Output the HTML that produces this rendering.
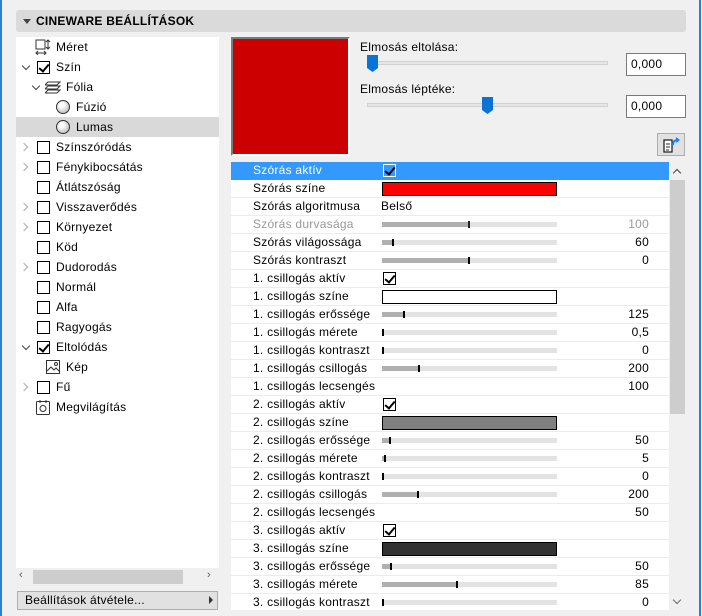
<!DOCTYPE html>
<html><head><meta charset="utf-8"><style>
*{box-sizing:border-box;margin:0;padding:0}
body{width:702px;height:616px;background:#f0f0f0;font-family:"Liberation Sans",sans-serif;font-size:12px;letter-spacing:0.25px;color:#000;position:relative;overflow:hidden}
.a{position:absolute}
.bl{left:0;top:0;width:2px;height:616px;background:#2b7fd6}
.br{left:699px;top:0;width:2px;height:616px;background:#2b7fd6}
.hdr{left:16px;top:10px;width:670px;height:22px;background:#dadada;border-radius:3px;font-weight:bold;font-size:12px;line-height:22px;padding-left:20px}
.tree{left:16px;top:37px;width:203px;height:531px;background:#fff}
.tr{position:absolute;left:0;width:203px;height:20px;line-height:20px}
.cb{position:absolute;top:4px;width:13px;height:13px;border:1px solid #000;background:#fff}
.cb.k::after{content:"";position:absolute;left:3px;top:0px;width:4px;height:8px;border:solid #000;border-width:0 2px 2px 0;transform:rotate(40deg)}
.chd{position:absolute;top:6px;width:6px;height:6px;border:solid #444;border-width:0 1.5px 1.5px 0;transform:rotate(45deg)}
.chr{position:absolute;top:7px;width:6px;height:6px;border:solid #aaa;border-width:0 1.5px 1.5px 0;transform:rotate(-45deg)}
.ball{position:absolute;top:3px;width:14px;height:14px;border-radius:50%;border:1px solid #333;background:radial-gradient(circle at 40% 35%,#fff 20%,#bbb 80%)}
.tbl{left:231px;top:162px;width:438px;height:448px;background:#fff;overflow:hidden}
.r{position:absolute;left:0;width:438px;height:18px;border-bottom:1px solid #ececec;line-height:17px}
.r .l{position:absolute;left:22px}
.r .n{position:absolute;right:20px}
.r .v{position:absolute;left:151px}
.sl{position:absolute;left:151px;top:6px;width:175px;height:5px;background:#e3e3e3}
.sl i{position:absolute;left:0;top:0;height:5px;background:#b0b0b0}
.sl b{position:absolute;top:-1px;width:2px;height:7px;background:#000}
.sw{position:absolute;left:151px;top:2px;width:175px;height:14px;border:1px solid #000}
.ck{position:absolute;left:152px;top:2px;width:13px;height:13px;border:1px solid #000;background:#fff}
.ck::after{content:"";position:absolute;left:3px;top:0;width:4px;height:8px;border:solid #000;border-width:0 2px 2px 0;transform:rotate(40deg)}
</style></head><body>
<div class="a bl"></div><div class="a br"></div>
<div class="a hdr">CINEWARE BEÁLLÍTÁSOK</div>
<div class="a" style="left:23px;top:19px;width:0;height:0;border-left:4px solid transparent;border-right:4px solid transparent;border-top:5px solid #444"></div>

<div class="a tree">
 <div class="tr" style="top:0"><svg class="a" style="left:19px;top:2px" width="16" height="16"><rect x="1" y="1" width="9" height="9" fill="none" stroke="#333"/><path d="M13 1v9M11 3l2-2 2 2M11 8l2 2 2-2M1 14h10M3 12l-2 2 2 2M9 12l2 2-2 2" fill="none" stroke="#333"/></svg><span class="a" style="left:40px">Méret</span></div>
 <div class="tr" style="top:20px"><span class="chd" style="left:7px"></span><span class="cb k" style="left:21px"></span><span class="a" style="left:40px">Szín</span></div>
 <div class="tr" style="top:40px"><span class="chd" style="left:17px"></span><svg class="a" style="left:29px;top:3px" width="16" height="14"><path d="M3 2h12l-3 3H0zM3 6h12l-3 3H0zM3 10h12l-3 3H0z" fill="#fff" stroke="#333"/></svg><span class="a" style="left:50px">Fólia</span></div>
 <div class="tr" style="top:60px"><span class="ball" style="left:40px"></span><span class="a" style="left:60px">Fúzió</span></div>
 <div class="tr" style="top:80px;background:#d9d9d9"><span class="ball" style="left:40px"></span><span class="a" style="left:60px">Lumas</span></div>
 <div class="tr" style="top:100px"><span class="chr" style="left:5px"></span><span class="cb" style="left:21px"></span><span class="a" style="left:40px">Színszóródás</span></div>
 <div class="tr" style="top:120px"><span class="chr" style="left:5px"></span><span class="cb" style="left:21px"></span><span class="a" style="left:40px">Fénykibocsátás</span></div>
 <div class="tr" style="top:140px"><span class="cb" style="left:21px"></span><span class="a" style="left:40px">Átlátszóság</span></div>
 <div class="tr" style="top:160px"><span class="chr" style="left:5px"></span><span class="cb" style="left:21px"></span><span class="a" style="left:40px">Visszaverődés</span></div>
 <div class="tr" style="top:180px"><span class="chr" style="left:5px"></span><span class="cb" style="left:21px"></span><span class="a" style="left:40px">Környezet</span></div>
 <div class="tr" style="top:200px"><span class="cb" style="left:21px"></span><span class="a" style="left:40px">Köd</span></div>
 <div class="tr" style="top:220px"><span class="chr" style="left:5px"></span><span class="cb" style="left:21px"></span><span class="a" style="left:40px">Dudorodás</span></div>
 <div class="tr" style="top:240px"><span class="cb" style="left:21px"></span><span class="a" style="left:40px">Normál</span></div>
 <div class="tr" style="top:260px"><span class="cb" style="left:21px"></span><span class="a" style="left:40px">Alfa</span></div>
 <div class="tr" style="top:280px"><span class="cb" style="left:21px"></span><span class="a" style="left:40px">Ragyogás</span></div>
 <div class="tr" style="top:300px"><span class="chd" style="left:7px"></span><span class="cb k" style="left:21px"></span><span class="a" style="left:40px">Eltolódás</span></div>
 <div class="tr" style="top:320px"><svg class="a" style="left:30px;top:3px" width="15" height="15"><rect x="0.5" y="0.5" width="13" height="13" fill="#fff" stroke="#333"/><path d="M1 11l4-4 3 3 2-2 4 4" fill="none" stroke="#333"/><circle cx="10" cy="4" r="1.5" fill="none" stroke="#333"/></svg><span class="a" style="left:50px">Kép</span></div>
 <div class="tr" style="top:340px"><span class="chr" style="left:5px"></span><span class="cb" style="left:21px"></span><span class="a" style="left:40px">Fű</span></div>
 <div class="tr" style="top:360px"><svg class="a" style="left:20px;top:2px" width="14" height="16"><rect x="0.5" y="2.5" width="13" height="13" rx="1" fill="#fff" stroke="#333"/><path d="M4 1v3M10 1v3" stroke="#333"/><circle cx="7" cy="9.5" r="3" fill="none" stroke="#333"/></svg><span class="a" style="left:40px">Megvilágítás</span></div>
</div>
<div class="a" style="left:16px;top:570px;width:203px;height:14px;background:#f0f0f0"></div>
<div class="a" style="left:33px;top:570px;width:150px;height:14px;background:#cdcdcd"></div>
<div class="a" style="left:19px;top:569px;color:#555;font-size:11px">&lsaquo;</div>
<div class="a" style="left:207px;top:569px;color:#555;font-size:11px">&rsaquo;</div>
<div class="a" style="left:17px;top:591px;width:201px;height:19px;background:#e1e1e1;border:1px solid #adadad;line-height:17px;padding-left:7px">Beállítások átvétele...</div>
<div class="a" style="left:209px;top:596px;width:0;height:0;border-top:4px solid transparent;border-bottom:4px solid transparent;border-left:4px solid #333"></div>

<div class="a" style="left:231px;top:37px;width:119px;height:119px;background:#cc0000;border:2px solid #7a7a7a;border-right-color:#fff;border-bottom-color:#fff"></div>
<div class="a" style="left:360px;top:40px">Elmosás eltolása:</div>
<div class="a" style="left:367px;top:61px;width:241px;height:4px;background:#e6e6e6;border:1px solid #d0d0d0"></div>
<svg class="a" style="left:367px;top:55px" width="12" height="18"><path d="M0 0h11v13l-5.5 4L0 13z" fill="#0a74d6"/></svg>
<div class="a" style="left:626px;top:53px;width:60px;height:23px;background:#fff;border:1px solid #7a7a7a;line-height:21px;padding-left:4px">0,000</div>
<div class="a" style="left:360px;top:82px">Elmosás léptéke:</div>
<div class="a" style="left:367px;top:103px;width:241px;height:4px;background:#e6e6e6;border:1px solid #d0d0d0"></div>
<svg class="a" style="left:482px;top:97px" width="12" height="18"><path d="M0 0h11v13l-5.5 4L0 13z" fill="#0a74d6"/></svg>
<div class="a" style="left:626px;top:95px;width:60px;height:23px;background:#fff;border:1px solid #7a7a7a;line-height:21px;padding-left:4px">0,000</div>
<div class="a" style="left:657px;top:133px;width:28px;height:23px;background:#e1e1e1;border:1px solid #adadad"></div>
<svg class="a" style="left:662px;top:136px" width="20" height="18"><path d="M2 4h8v12H2z" fill="#fff" stroke="#222" stroke-width="1.3"/><path d="M4 8h4M4 11h4M4 14h3" stroke="#222"/><path d="M11 9c0-4 2-5 5-5" fill="none" stroke="#1e7ef0" stroke-width="2"/><path d="M14 1l4 3-4 3z" fill="#1e7ef0"/></svg>

<div class="a tbl">
 <div class="r" style="top:0;background:#3399ff;color:#fff;border-color:#3399ff"><span class="l">Szórás aktív</span><span class="ck" style="border-color:#fff;background:#3399ff"></span></div>
 <div class="r" style="top:18px"><span class="l">Szórás színe</span><span class="sw" style="background:#ff0000"></span></div>
 <div class="r" style="top:36px"><span class="l">Szórás algoritmusa</span><span class="v" style="left:150px">Belső</span></div>
 <div class="r" style="top:54px;color:#999"><span class="l">Szórás durvasága</span><span class="sl"><i style="width:87px"></i><b style="left:86px;background:#222"></b></span><span class="n">100</span></div>
 <div class="r" style="top:72px"><span class="l">Szórás világossága</span><span class="sl"><i style="width:10px"></i><b style="left:10px"></b></span><span class="n">60</span></div>
 <div class="r" style="top:90px"><span class="l">Szórás kontraszt</span><span class="sl"><i style="width:87px"></i><b style="left:86px"></b></span><span class="n">0</span></div>
 <div class="r" style="top:108px"><span class="l">1. csillogás aktív</span><span class="ck"></span></div>
 <div class="r" style="top:126px"><span class="l">1. csillogás színe</span><span class="sw" style="background:#fff"></span></div>
 <div class="r" style="top:144px"><span class="l">1. csillogás erőssége</span><span class="sl"><i style="width:21px"></i><b style="left:21px"></b></span><span class="n">125</span></div>
 <div class="r" style="top:162px"><span class="l">1. csillogás mérete</span><span class="sl"><b style="left:0"></b></span><span class="n">0,5</span></div>
 <div class="r" style="top:180px"><span class="l">1. csillogás kontraszt</span><span class="sl"><b style="left:0"></b></span><span class="n">0</span></div>
 <div class="r" style="top:198px"><span class="l">1. csillogás csillogás</span><span class="sl"><i style="width:36px"></i><b style="left:36px"></b></span><span class="n">200</span></div>
 <div class="r" style="top:216px"><span class="l">1. csillogás lecsengés</span><span class="n">100</span></div>
 <div class="r" style="top:234px"><span class="l">2. csillogás aktív</span><span class="ck"></span></div>
 <div class="r" style="top:252px"><span class="l">2. csillogás színe</span><span class="sw" style="background:#808080"></span></div>
 <div class="r" style="top:270px"><span class="l">2. csillogás erőssége</span><span class="sl"><i style="width:7px"></i><b style="left:7px"></b></span><span class="n">50</span></div>
 <div class="r" style="top:288px"><span class="l">2. csillogás mérete</span><span class="sl"><i style="width:2px"></i><b style="left:2px"></b></span><span class="n">5</span></div>
 <div class="r" style="top:306px"><span class="l">2. csillogás kontraszt</span><span class="sl"><b style="left:0"></b></span><span class="n">0</span></div>
 <div class="r" style="top:324px"><span class="l">2. csillogás csillogás</span><span class="sl"><i style="width:35px"></i><b style="left:35px"></b></span><span class="n">200</span></div>
 <div class="r" style="top:342px"><span class="l">2. csillogás lecsengés</span><span class="n">50</span></div>
 <div class="r" style="top:360px"><span class="l">3. csillogás aktív</span><span class="ck"></span></div>
 <div class="r" style="top:378px"><span class="l">3. csillogás színe</span><span class="sw" style="background:#333"></span></div>
 <div class="r" style="top:396px"><span class="l">3. csillogás erőssége</span><span class="sl"><i style="width:8px"></i><b style="left:8px"></b></span><span class="n">50</span></div>
 <div class="r" style="top:414px"><span class="l">3. csillogás mérete</span><span class="sl"><i style="width:74px"></i><b style="left:74px"></b></span><span class="n">85</span></div>
 <div class="r" style="top:432px"><span class="l">3. csillogás kontraszt</span><span class="sl"><b style="left:0"></b></span><span class="n">0</span></div>
</div>
<div class="a" style="left:669px;top:162px;width:17px;height:448px;background:#f0f0f0"></div>
<div class="a" style="left:670px;top:180px;width:15px;height:234px;background:#cdcdcd"></div>
<div class="a" style="left:674px;top:170px;width:6px;height:6px;border:solid #444;border-width:1.5px 0 0 1.5px;transform:rotate(45deg)"></div>
<div class="a" style="left:674px;top:597px;width:6px;height:6px;border:solid #666;border-width:0 1.2px 1.2px 0;transform:rotate(45deg)"></div>
</body></html>
